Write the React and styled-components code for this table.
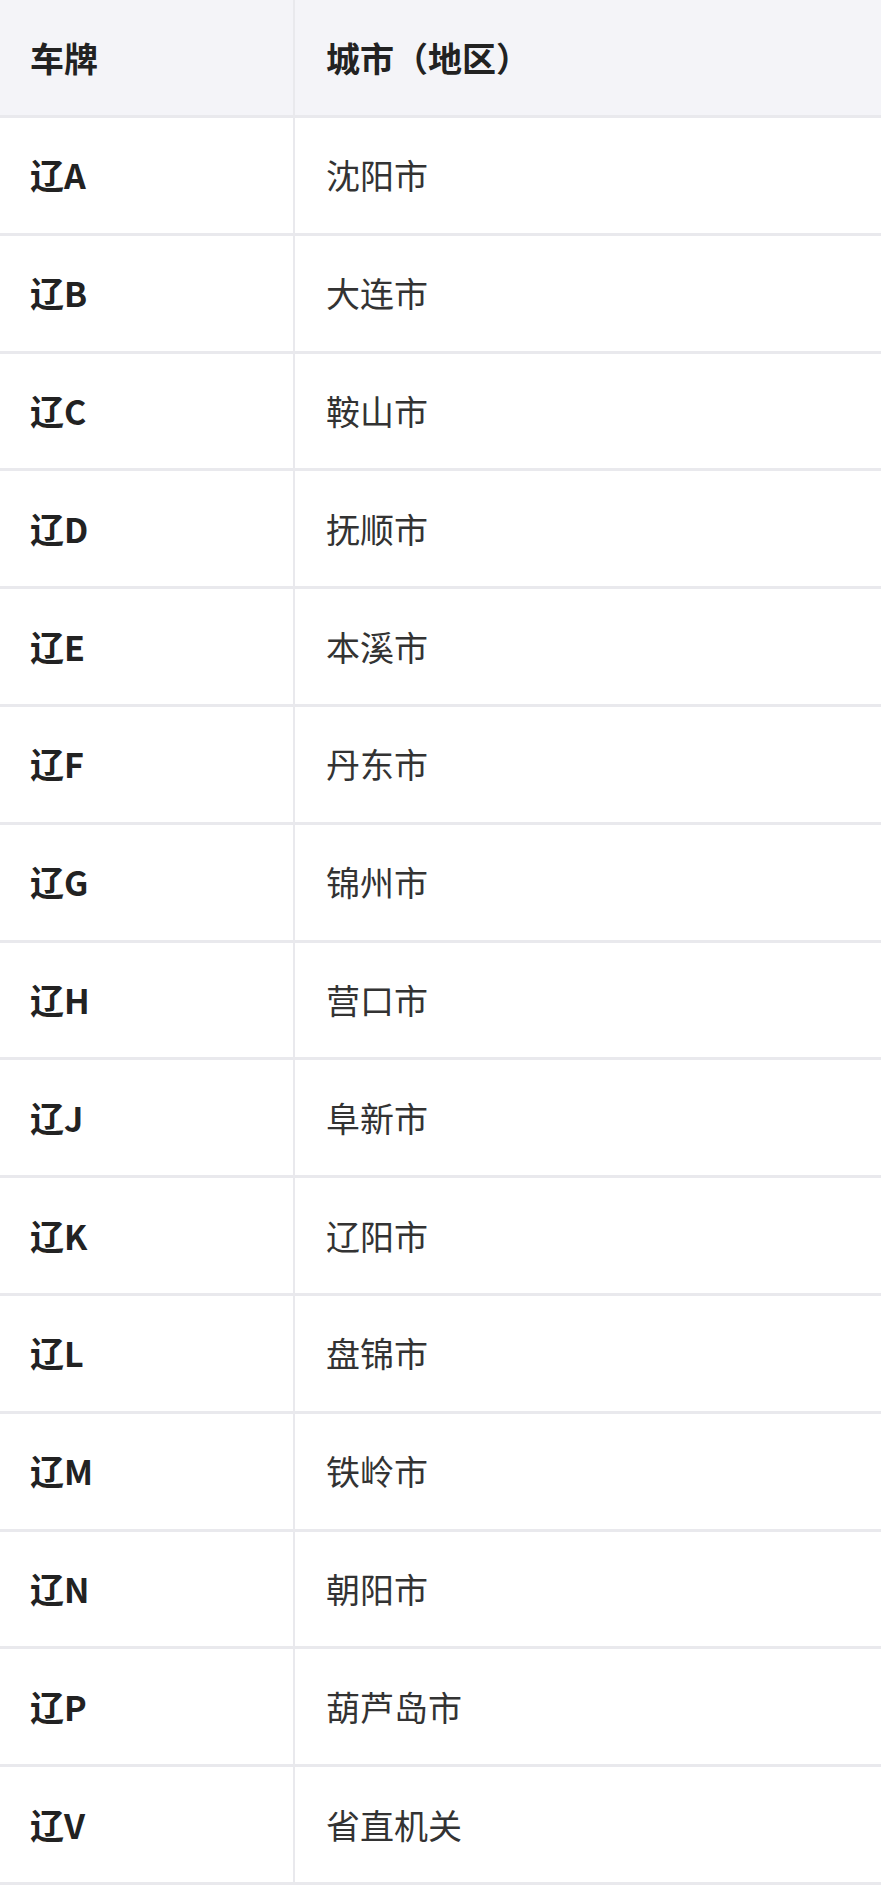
import React from 'react';
import styled, { createGlobalStyle } from 'styled-components';

const GlobalStyle = createGlobalStyle`
  body {
    margin: 0;
    background: #fff;
    font-family: "Noto Sans CJK SC", "Noto Sans", sans-serif;
    color: #333;
  }
`;

const Table = styled.div`
  width: 881px;
`;

const Row = styled.div`
  display: grid;
  grid-template-columns: 295px 1fr;
  height: ${({ $head }) => ($head ? '118px' : '117.8px')};
  box-sizing: border-box;
  border-bottom: 3px solid #e9e9ed;
  background: ${({ $head }) => ($head ? '#f4f4f8' : '#fff')};
`;

const Cell = styled.div`
  display: flex;
  align-items: center;
  padding-left: ${({ $first }) => ($first ? '30px' : '31px')};
  border-right: ${({ $first }) => ($first ? '2px solid #e9e9ed' : 'none')};
  font-size: 34px;
  line-height: 1;
  font-weight: ${({ $bold }) => ($bold ? 700 : 400)};
  color: ${({ $bold }) => ($bold ? '#222' : '#333')};
`;

const rows = [
  ['辽A', '沈阳市'],
  ['辽B', '大连市'],
  ['辽C', '鞍山市'],
  ['辽D', '抚顺市'],
  ['辽E', '本溪市'],
  ['辽F', '丹东市'],
  ['辽G', '锦州市'],
  ['辽H', '营口市'],
  ['辽J', '阜新市'],
  ['辽K', '辽阳市'],
  ['辽L', '盘锦市'],
  ['辽M', '铁岭市'],
  ['辽N', '朝阳市'],
  ['辽P', '葫芦岛市'],
  ['辽V', '省直机关'],
];

const App = () => {
  return (
    <>
      <GlobalStyle />
      <Table>
        <Row $head>
          <Cell $first $bold>车牌</Cell>
          <Cell $bold>城市（地区）</Cell>
        </Row>
        {rows.map(([plate, city]) => (
          <Row key={plate}>
            <Cell $first $bold>{plate}</Cell>
            <Cell>{city}</Cell>
          </Row>
        ))}
      </Table>
    </>
  );
};

export default App;
